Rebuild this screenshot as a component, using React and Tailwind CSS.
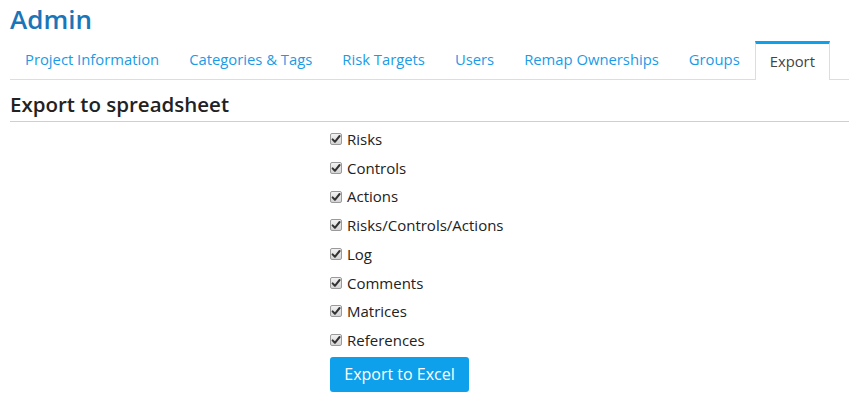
import React from "react";

const tabs = [
  "Project Information",
  "Categories & Tags",
  "Risk Targets",
  "Users",
  "Remap Ownerships",
  "Groups",
  "Export",
];

const exportItems = [
  "Risks",
  "Controls",
  "Actions",
  "Risks/Controls/Actions",
  "Log",
  "Comments",
  "Matrices",
  "References",
];

function Check({ checked, onChange }) {
  return (
    <span className="relative inline-block h-[12px] w-[12px]">
      <input
        type="checkbox"
        checked={checked}
        onChange={onChange}
        className="m-0 block h-[12px] w-[12px] appearance-none rounded-[2px] border border-[#9a9a9a] bg-gradient-to-b from-[#f2f2f2] to-[#d4d4d4]"
      />
      {checked && (
        <svg viewBox="0 0 12 12" className="pointer-events-none absolute left-0 top-0 h-[12px] w-[12px]">
          <path d="M2.6 6.4 L4.9 8.8 L9.6 3.0" fill="none" stroke="#333" strokeWidth="2" strokeLinecap="round" strokeLinejoin="round" />
        </svg>
      )}
    </span>
  );
}

export default function App() {
  const [checked, setChecked] = React.useState(() => exportItems.map(() => true));

  const toggle = (idx) =>
    setChecked((prev) => prev.map((v, i) => (i === idx ? !v : v)));

  return (
    <div className="min-h-[406px] bg-white pl-[10px] text-[#222]" style={{ fontFamily: '"Open Sans", "Liberation Sans", sans-serif' }}>
      <h1 className="pt-[4px] text-[26px] font-semibold leading-[30px] text-[#1b75b9]">Admin</h1>

      {/* Tabs */}
      <ul className="mt-[7px] flex border-b border-[#dddddd]">
        {tabs.map((t) => {
          const active = t === "Export";
          return (
            <li key={t} className="-mb-px">
              {active ? (
                <span className="block border-x border-t-[3px] border-x-[#dddddd] border-t-[#0ea0ea] bg-white px-[14px] pb-[9px] pt-[8px] text-[14.8px] leading-[19px] text-[#444]">
                  {t}
                </span>
              ) : (
                <a href="#" className="block px-[15px] pb-[11px] pt-[9px] text-[14.8px] leading-[19px] text-[#1a9be6]">
                  {t}
                </a>
              )}
            </li>
          );
        })}
      </ul>

      {/* Section heading */}
      <h2 className="mt-[12px] border-b border-[#cfcfcf] pb-[5px] text-[20.5px] font-semibold leading-[24px] text-[#222]">
        Export to spreadsheet
      </h2>

      {/* Checkbox list */}
      <form className="ml-[320px] mt-[3px] flex flex-col" onSubmit={(e) => e.preventDefault()}>
        {exportItems.map((item, idx) => (
          <label key={item} className="flex h-[28.7px] items-center gap-[5px] text-[15px] text-[#222]">
            <Check checked={checked[idx]} onChange={() => toggle(idx)} />
            {item}
          </label>
        ))}
        <div>
          <button
            type="submit"
            className="mt-[2px] h-[35px] w-[139px] rounded-[3px] bg-[#0ea0ea] text-[16px] text-white"
          >
            Export to Excel
          </button>
        </div>
      </form>
    </div>
  );
}
